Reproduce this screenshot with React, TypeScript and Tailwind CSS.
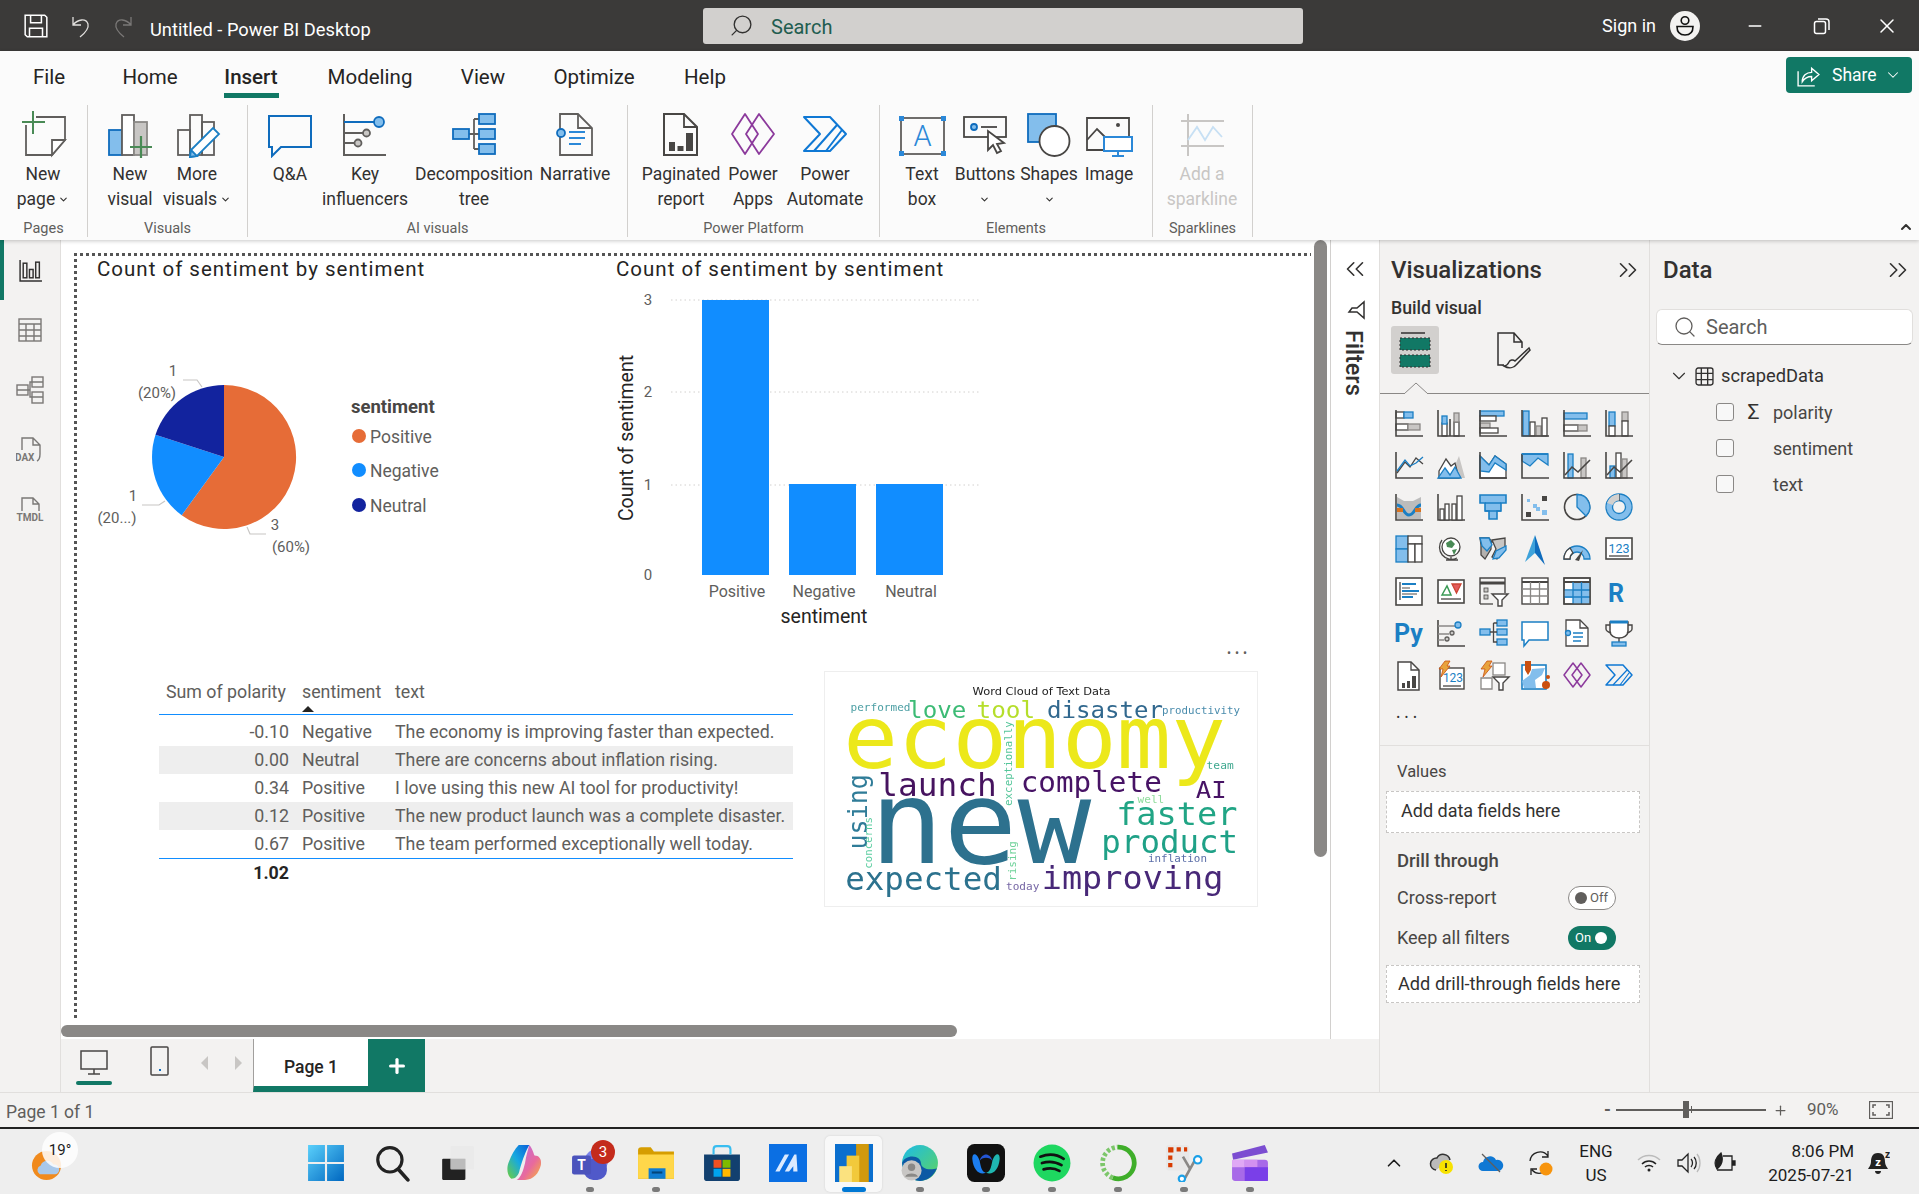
import type { ReactNode } from 'react';
import { ChevronDown, ChevronUp, ChevronsLeft, ChevronsRight, Minus, Plus, Search, X } from 'lucide-react';

const D = '#484644';
const S = '#1b7fc4';
const L = '#83beec';
const Gr = '#c8c6c4';

const Rb = (x: number, y: number, w: number, h: number) => <rect x={x} y={y} width={w} height={h} fill={L} stroke={S} />;
const Rg = (x: number, y: number, w: number, h: number) => <rect x={x} y={y} width={w} height={h} fill={Gr} stroke="#8a8886" />;
const Rw = (x: number, y: number, w: number, h: number) => <rect x={x} y={y} width={w} height={h} fill="#fff" stroke={D} />;
const Axis = () => <path d="M1 1V27H28" stroke={D} strokeWidth="1.6" />;

// ribbon button: 48px icon + up to two label lines
const RibbonItem = ({ w, icon, lines, chevron, muted }: { w: number; icon: ReactNode; lines: string[]; chevron?: boolean; muted?: boolean }) => (
  <div style={{ width: w }} className={`flex flex-col items-center ${muted ? 'text-[#c8c6c4]' : 'text-[#323130]'}`}>
    <svg viewBox="0 0 48 48" fill="none" strokeWidth="1.8" className="w-[48px] h-[48px] shrink-0 mt-[5px]">{icon}</svg>
    <div className="mt-[4px] text-[17.5px] leading-[25px] text-center whitespace-nowrap flex flex-col items-center">
      {lines.map((l, i) => (
        <span key={l} className="flex items-center h-[25px]">
          {l}
          {chevron && lines.length > 1 && i === lines.length - 1 && <ChevronDown size={11} strokeWidth={2.4} className="ml-[3px]" />}
        </span>
      ))}
      {chevron && lines.length === 1 && <ChevronDown size={11} strokeWidth={2.4} className="h-[25px]" />}
    </div>
  </div>
);

const RibbonGroup = ({ w, pl, label, children }: { w: number; pl: number; label: string; children: ReactNode }) => (
  <div style={{ width: w }} className="h-[132px] border-r border-[#d2d0ce] flex flex-col shrink-0">
    <div style={{ paddingLeft: pl }} className="flex flex-1">{children}</div>
    <div className="h-[22px] text-[14.5px] leading-[28px] text-center text-[#605e5c]">{label}</div>
  </div>
);

const vizIcons: ReactNode[] = [
  <>{Rw(1, 3, 8, 6)}{Rb(9, 3, 9, 6)}{Rw(1, 15, 12, 6)}{Rg(13, 15, 12, 6)}<Axis /></>,
  <>{Rw(5, 14, 5, 13)}{Rb(5, 7, 5, 8)}{Rw(17, 13, 5, 14)}{Rg(17, 4, 5, 9)}<path d="M13 10V27M1 1V27H28" stroke={D} strokeWidth="1.6" /></>,
  <>{Rb(1, 2, 24, 5)}{Rw(1, 7, 16, 5)}{Rg(1, 14, 10, 5)}{Rw(1, 19, 18, 5)}<Axis /></>,
  <>{Rb(2, 2, 6, 25)}{Rw(9, 13, 5, 14)}{Rg(15, 17, 5, 10)}{Rw(21, 9, 5, 18)}<Axis /></>,
  <>{Rb(1, 4, 23, 6)}{Rw(1, 16, 14, 6)}{Rg(15, 16, 9, 6)}<Axis /></>,
  <>{Rb(4, 3, 6, 14)}{Rw(4, 17, 6, 10)}{Rg(17, 3, 6, 9)}{Rw(17, 12, 6, 15)}<Axis /></>,
  <><Axis /><path d="M2 22L10 11L15 16L21 7L28 13" stroke={D} /><path d="M2 18L10 7L15 13L21 10L28 4" stroke={S} transform="translate(0 2)" /></>,
  <><path d="M2 27L10 11L16 19L22 5L28 27Z" fill={Gr} /><path d="M2 20L9 8L14 15L18 12L22 27H2Z" fill="#fff" stroke={D} /><path d="M1 27L8 17L13 24L18 16L24 27Z" fill={L} stroke={S} /></>,
  <><path d="M1 27V5L10 14L16 5L27 13V27Z" fill="#fff" stroke={D} /><path d="M1 20V5L10 14L16 5L27 13V19L16 12L10 21Z" fill={L} stroke={S} /><Axis /></>,
  <><path d="M1 3H27V14L17 7L9 15L1 10Z" fill={L} stroke={S} /><path d="M1 3V27H28" stroke={D} strokeWidth="1.6" /><path d="M1 3H27" stroke={S} strokeWidth="1.6" /></>,
  <>{Rb(5, 3, 5, 24)}{Rg(18, 7, 5, 20)}<path d="M2 24L9 16L15 21L27 9" stroke={D} strokeWidth="1.6" /><Axis /></>,
  <>{Rb(5, 15, 5, 12)}{Rw(11, 2, 5, 25)}{Rg(17, 8, 5, 19)}<path d="M2 24L9 16L15 21L27 9" stroke={D} strokeWidth="1.6" /><Axis /></>,
  <><path d="M2 4L9 8L18 8L26 4V26H2Z" fill="#bcbcbc" /><path d="M2 12C9 12 8 22 14 22S20 12 26 12" stroke={S} strokeWidth="3" /><path d="M2 17H8M20 17H26" stroke="#d9731f" strokeWidth="4" /><Axis /></>,
  <><Axis />{Rw(3, 16, 4, 11)}{Rw(8, 11, 4, 16)}{Rw(15, 11, 4, 16)}{Rw(20, 3, 5, 24)}</>,
  <><path d="M1 2H27V10H22V18H18V26H10V18H6V10H1Z" fill={L} stroke={S} strokeWidth="1.6" /><path d="M6 10H22M6 18H22" stroke={S} strokeWidth="1.4" /></>,
  <><Axis /><rect x="21" y="3" width="5" height="5" fill={D} /><rect x="5" y="19" width="5" height="5" fill={D} /><rect x="12" y="11" width="4" height="4" fill={L} /><rect x="6" y="6" width="3" height="3" fill={L} /><rect x="21" y="17" width="5" height="5" fill={L} /><rect x="15" y="14" width="4" height="4" fill={L} /></>,
  <><circle cx="14" cy="14" r="12.5" fill="#f3f2f1" stroke={D} strokeWidth="1.6" /><path d="M14 14V1.5A12.5 12.5 0 0 1 23 23Z" fill={L} stroke={S} /></>,
  <><circle cx="14" cy="14" r="9.5" stroke={L} strokeWidth="6" /><circle cx="14" cy="14" r="13" stroke={S} /><circle cx="14" cy="14" r="6.5" stroke={S} /><path d="M14 1V8" stroke={D} /><path d="M14 1A13 13 0 0 0 2 10L8 12A6.500 6.500 0 0 1 14 7.500Z" fill="#d2d0ce" /></>,
  <>{Rb(1, 1, 12, 13)}{Rb(1, 14, 12, 13)}{Rw(13, 1, 14, 8)}{Rw(13, 9, 7, 18)}{Rw(20, 9, 7, 18)}</>,
  <><circle cx="14" cy="12" r="9" fill="#fff" stroke={D} /><path d="M9 8L14 5L18 9L15 13L10 12ZM15 15L20 14L17 20Z" fill="#498a55" /><path d="M9 25H21M14 22V25M5 5A12 12 0 0 0 20 23" stroke={D} strokeWidth="1.3" /></>,
  <><path d="M1 3H10L13 7H12V14L6 24L2 20V10Z" fill="#b3b0ad" stroke={D} /><path d="M1 3H10L13 10L8 16L3 11Z" fill={L} stroke={S} /><path d="M13 5L26 3V14L18 24L13 22L17 14Z" fill="#c8c6c4" stroke={D} /><path d="M27 11V15L20 23L14 24L17 16Z" fill={L} stroke={S} /></>,
  <><path d="M14 0L4 27L14 18Z" fill="#3ea2da" /><path d="M14 0L24 30L14 18Z" fill="#0f6cbd" /></>,
  <><path d="M1 24A13 13 0 0 1 27 24H21A7 7 0 0 0 7 24Z" fill={L} stroke={S} /><path d="M1 24A13 13 0 0 1 7 13L10 18A7 7 0 0 0 7 24Z" fill="#fff" stroke={D} /><path d="M12 25L20 15L16 26Z" fill={D} /></>,
  <><rect x="1" y="3" width="26" height="21" fill="#fff" stroke={D} strokeWidth="1.6" /><path d="M4 21H24" stroke={D} /><text x="14" y="18" textAnchor="middle" fontSize="12.500" fill={S} stroke="none" fontFamily="Roboto">123</text></>,
  <><rect x="1" y="1" width="26" height="27" fill="#fff" stroke={D} strokeWidth="1.6" /><path d="M5 5V23" stroke={D} /><path d="M7 7H21M7 14H24M7 20H18" stroke={S} strokeWidth="2" /><path d="M7 11H15M7 17H22" stroke="#8a8886" /></>,
  <><rect x="1" y="3" width="26" height="23" fill="#fff" stroke={D} strokeWidth="1.6" /><path d="M4 22H24" stroke={D} /><path d="M5 18L10 9L14 18Z" stroke="#3a9a55" strokeWidth="1.5" /><path d="M15 7H24L19.500 16Z" fill="#e35b5b" stroke="#c43" /></>,
  <><path d="M1 27V1H26V16" stroke={D} strokeWidth="1.4" /><path d="M1 6H26" stroke={D} strokeWidth="3" /><rect x="5" y="11" width="4" height="4" fill={Gr} stroke={D} strokeWidth=".8" /><rect x="5" y="18" width="4" height="4" fill={Gr} stroke={D} strokeWidth=".8" /><path d="M1 27H14" stroke={D} /><path d="M13 17H29L23 23V29H19V23Z" fill="#fff" stroke={D} strokeWidth="1.4" /></>,
  <><rect x="1" y="1" width="26" height="26" fill="#fff" stroke={D} strokeWidth="1.4" /><path d="M1 5H27" stroke={D} strokeWidth="2" /><path d="M1 12H27M1 19H27M9.500 5V27M18.500 5V27" stroke="#8a8886" /></>,
  <><rect x="1" y="1" width="26" height="26" fill="#fff" stroke={D} strokeWidth="1.4" /><path d="M10 5H27V27H10ZM1 14H27V21H1Z" fill={L} /><path d="M1 5H27" stroke={D} strokeWidth="2" /><path d="M1 13H27M1 20H27M10 5V27M18.500 5V27" stroke={S} /><rect x="1" y="1" width="26" height="26" stroke={D} strokeWidth="1.4" /></>,
  <text x="11" y="25" textAnchor="middle" fontSize="25" fontWeight="700" fill="#1b7fc4" stroke="none" fontFamily="Roboto">R</text>,
  <text x="-1" y="23" fontSize="25" fontWeight="700" fill="#1b7fc4" stroke="none" fontFamily="Roboto">Py</text>,
  <><path d="M1 1V27H28" stroke={D} strokeWidth="1.6" /><path d="M1 7H18M1 15H12M1 21H7" stroke="#8a8886" /><circle cx="21" cy="6" r="3" fill={L} stroke={S} /><circle cx="15" cy="14" r="2" fill={Gr} stroke="#605e5c" /><circle cx="10" cy="20" r="2" fill={Gr} stroke="#605e5c" /></>,
  <>{Rb(1, 10, 10, 6)}{Rb(18, 1, 10, 6)}{Rb(18, 10, 10, 6)}{Rb(18, 20, 10, 6)}<path d="M11 13H18M14.500 4V23H18M14.500 4H18" stroke={D} /></>,
  <path d="M1 3H27V21H8L3 27V21H1Z" fill="#fff" stroke={S} strokeWidth="1.5" />,
  <><path d="M3 1H17L25 9V27H3Z" fill="#fff" stroke={D} strokeWidth="1.3" /><path d="M17 1V9H25" stroke={D} /><circle cx="5" cy="14" r="2.500" fill={L} stroke={S} /><path d="M10 14H20M10 18H20M10 22H18" stroke={S} /></>,
  <><path d="M5 3H23V12C23 17 18 19 14 19S5 17 5 12Z" fill="#fff" stroke={D} strokeWidth="1.5" /><path d="M5 3H23" stroke={S} strokeWidth="3" /><path d="M5 6H1V10C1 12 3 13 6 14M23 6H27V10C27 12 25 13 22 14M14 19V24" stroke={D} strokeWidth="1.4" /><rect x="7" y="23" width="14" height="4" fill={L} stroke={S} /></>,
  <><path d="M3 1H16L24 9V29H3Z" fill="#fff" stroke={D} strokeWidth="1.5" /><path d="M16 1V9H24" stroke={D} /><rect x="7" y="22" width="3" height="5" fill={D} /><rect x="12" y="20" width="3" height="7" fill={D} /><rect x="17" y="15" width="4" height="12" fill={D} /></>,
  <><rect x="3" y="7" width="24" height="21" fill="#fff" stroke={D} strokeWidth="1.4" /><path d="M6 25H24" stroke={D} /><text x="16" y="21" textAnchor="middle" fontSize="12" fill={S} stroke="none" fontFamily="Roboto">123</text><path d="M8 0H13L10 5H13L4 16L6 8H2Z" fill="#e8a33d" stroke="#ca5010" strokeWidth=".8" /></>,
  <><path d="M8 0H13L10 5H13L4 16L6 8H2Z" fill="#e8a33d" stroke="#ca5010" strokeWidth=".8" /><rect x="14" y="2" width="12" height="12" fill="#fff" stroke="#8a8886" /><path d="M2 17H13V28H2Z" fill="#fff" stroke="#8a8886" /><path d="M14 16H30L24 22V29H20V22Z" fill="#fff" stroke={D} strokeWidth="1.4" /></>,
  <><rect x="1" y="4" width="24" height="24" fill="#fff" stroke={S} strokeWidth="1.6" /><path d="M1 20L9 14L11 8L24 7L21 14L14 19L15 27H3Z" fill={L} /><path d="M4 0H10V9L7 14L4 9Z" fill="#ca5010" /><circle cx="25" cy="24" r="4" fill="#ca5010" /><circle cx="27" cy="16" r="2" fill="#ca5010" /></>,
  <g stroke="#8c3a9c" strokeWidth="1.500" strokeLinejoin="round"><path d="M10 2L1 14L10 26L19 14Z" /><path d="M18 2L27 14L18 26L9 14Z" /></g>,
  <><path d="M1 4H18L27 14L18 24H1L10 14Z" stroke="#0f78d4" strokeWidth="1.500" strokeLinejoin="round" /><path d="M8 24L22 9M15 24L24 12" stroke="#0f78d4" strokeWidth="1.200" /></>,
];

const words = [
  ['performed', 120, 150, 32, '#4c9fa4', 175],
  ['love', 298, 172, 72, '#3cbb75', 162],
  ['tool', 505, 172, 72, '#b5de2b', 163],
  ['disaster', 718, 172, 72, '#31688e', 337],
  ['productivity', 1062, 160, 30, '#4a8cad', 230],
  ['economy', 121, 322, 266, '#ece81a', 1105],
  ['launch', 210, 408, 95, '#46135f', 340],
  ['complete', 640, 395, 85, '#471365', 410],
  ['AI', 1168, 413, 67, '#471365', 80],
  ['team', 1197, 328, 30, '#3fa88f', 76],
  ['well', 988, 428, 30, '#8fdc9c', 75],
  ['new', 210, 612, 350, '#2d718e', 600],
  ['faster', 930, 495, 96, '#21a585', 348],
  ['product', 885, 582, 94, '#1fa187', 395],
  ['inflation', 1020, 608, 32, '#5b6ea8', 172],
  ['expected', 110, 692, 95, '#2c728e', 455],
  ['improving', 705, 691, 98, '#482878', 530],
  ['today', 590, 694, 30, '#7667a5', 95],
] as const;

const vWords = [
  ['using', 166, 562, 80, '#2f7c98', 212],
  ['exceptionally', 605, 435, 32, '#55c69a', 250],
  ['concerns', 183, 625, 30, '#5bcda0', 150],
  ['rising', 618, 662, 30, '#6fd29a', 114],
] as const;

const rows = [
  ['-0.10', 'Negative', 'The economy is improving faster than expected.'],
  ['0.00', 'Neutral', 'There are concerns about inflation rising.'],
  ['0.34', 'Positive', 'I love using this new AI tool for productivity!'],
  ['0.12', 'Positive', 'The new product launch was a complete disaster.'],
  ['0.67', 'Positive', 'The team performed exceptionally well today.'],
];

const Toggle = ({ on }: { on?: boolean }) =>
  on ? (
    <div className="w-[48px] h-[24px] rounded-full bg-[#117865] flex items-center pl-[7px] gap-[4px] text-white text-[13px]">
      On<span className="w-[12px] h-[12px] rounded-full bg-white" />
    </div>
  ) : (
    <div className="w-[48px] h-[24px] rounded-full bg-white border border-[#8a8886] flex items-center pl-[6px] gap-[3px] text-[#605e5c] text-[13px]">
      <span className="w-[12px] h-[12px] rounded-full bg-[#605e5c]" />Off
    </div>
  );

const TaskItem = ({ dot, active, children }: { dot?: boolean; active?: boolean; children: ReactNode }) => (
  <div className="relative w-[66px] h-full flex items-center justify-center">
    {active && <div className="absolute left-[4px] top-[7px] w-[57px] h-[56px] rounded-[5px] bg-[#f8f8f8] shadow-[0_0_2px_#ccc]" />}
    <svg viewBox="0 0 36 36" fill="none" className="relative w-[38px] h-[38px] mt-[2px]">{children}</svg>
    {dot && <div className="absolute left-[29px] bottom-[2px] w-[8px] h-[5px] rounded-full bg-[#7a7a7a]" />}
    {active && <div className="absolute left-[21px] bottom-[2px] w-[24px] h-[5px] rounded-full bg-[#0078d4]" />}
  </div>
);

const App = () => {
  return (
    <div className="w-[1919px] h-[1194px] overflow-hidden flex flex-col bg-[#f3f2f1] font-['Roboto','Liberation_Sans',sans-serif] text-[#323130]">
      {/* Title bar */}
      <div className="h-[51px] shrink-0 bg-[#3b3a39] flex items-center text-white">
        <div className="ml-[14px] w-[44px] flex justify-center">
          <svg viewBox="0 0 24 24" fill="none" stroke="#fff" strokeWidth="1.4" className="w-[26px] h-[26px]"><path d="M2 2H20L22 4V22H4L2 20Z" /><path d="M7 2V9H17V2M6 22V14H18V22" /></svg>
        </div>
        <div className="w-[44px] flex justify-center">
          <svg viewBox="0 0 24 24" fill="none" stroke="#e1dfdd" strokeWidth="1.3" className="w-[24px] h-[24px]"><path d="M5 3V11H13M5 11C10 5 18 4 20 10C21 14 17 19 12 23" /></svg>
        </div>
        <div className="w-[44px] flex justify-center">
          <svg viewBox="0 0 24 24" fill="none" stroke="#7a7877" strokeWidth="1.3" className="w-[24px] h-[24px]"><path d="M19 3V11H11M19 11C14 5 6 4 4 10C3 14 7 19 12 23" /></svg>
        </div>
        <div className="ml-[4px] w-[553px] text-[18.3px] pt-[8px]">Untitled - Power BI Desktop</div>
        <div className="w-[600px] h-[36px] bg-[#d2d0ce] rounded-[3px] flex items-center pl-[26px] text-[#225d50] text-[20px]">
          <Search size={25} strokeWidth={1.3} className="text-[#323130] -scale-x-100" />
          <span className="ml-[17px] pt-[2px]">Search</span>
        </div>
        <div className="ml-auto flex items-center">
          <span className="text-[18px]">Sign in</span>
          <svg viewBox="0 0 30 30" className="ml-[14px] w-[30px] h-[30px]"><circle cx="15" cy="15" r="15" fill="#f3f2f1" /><circle cx="15" cy="9.500" r="3.800" fill="none" stroke="#111" strokeWidth="1.600" /><path d="M7 15.500H23C23 21 20 24 15 24S7 21 7 15.500Z" fill="none" stroke="#111" strokeWidth="1.600" /></svg>
          <div className="ml-[22px] w-[66px] flex justify-center"><Minus size={20} strokeWidth={1.6} /></div>
          <div className="w-[67px] flex justify-center">
            <svg viewBox="0 0 18 18" fill="none" stroke="#fff" strokeWidth="1.500" className="w-[18px] h-[18px]"><rect x="1.500" y="4.500" width="11" height="12" rx="2" /><path d="M5 2H13C15 2 16 3 16 5V13" /></svg>
          </div>
          <div className="w-[64px] flex justify-center"><X size={24} strokeWidth={1.5} /></div>
        </div>
      </div>

      {/* Ribbon */}
      <div className="relative z-10 h-[189px] shrink-0 bg-[#fbfbfb] shadow-[0_1px_4px_rgba(0,0,0,0.22)]">
        <div className="h-[54px] flex items-start justify-between">
          <div className="flex text-[20.5px] text-[#252423]">
            {[['File', 98], ['Home', 104], ['Insert', 98], ['Modeling', 140], ['View', 86], ['Optimize', 136], ['Help', 86]].map(([t, w]) => (
              <div key={t} style={{ width: w }} className="h-[54px] relative flex justify-center pt-[11px]">
                <span className={t === 'Insert' ? 'font-medium' : ''}>{t}</span>
                {t === 'Insert' && <div className="absolute top-[42px] left-[22px] w-[55px] h-[5px] bg-[#117865]" />}
              </div>
            ))}
          </div>
          <div className="mt-[6px] mr-[7px] w-[126px] h-[36px] rounded-[4px] bg-[#117865] flex items-center pl-[10px] text-white text-[17.5px]">
            <svg viewBox="0 0 24 24" fill="none" stroke="#fff" strokeWidth="1.300" className="w-[25px] h-[25px]"><path d="M2 8V22H18" /><path d="M6 18C6 12 10 9 15 9V5L22 11L15 17V13C11 13 8 15 6 18Z" /></svg>
            <span className="ml-[11px]">Share</span>
            <ChevronDown size={18} strokeWidth={1.4} className="ml-[7px]" />
          </div>
        </div>
        <div className="flex">
          <RibbonGroup w={88} pl={8} label="Pages">
            <RibbonItem w={70} lines={['New', 'page']} chevron icon={<>
              <path d="M7 15V45H33L46 30V7H17" stroke="#605e5c" /><path d="M33 45V30H46Z" fill="#fff" stroke="#605e5c" /><path d="M14 1V24M3 12H26" stroke="#498a55" strokeWidth="2" />
            </>} />
          </RibbonGroup>
          <RibbonGroup w={160} pl={8} label="Visuals">
            <RibbonItem w={68} lines={['New', 'visual']} icon={<>
              <rect x="3" y="20" width="13" height="25" fill={L} stroke="#0f6cbd" /><rect x="16" y="5" width="12" height="40" fill="#fff" stroke="#605e5c" /><rect x="28" y="12" width="13" height="33" fill={Gr} stroke="#8a8886" /><path d="M35 26V48M24 37H46" stroke="#498a55" strokeWidth="2.200" />
            </>} />
            <RibbonItem w={66} lines={['More', 'visuals']} chevron icon={<>
              <rect x="5" y="20" width="12" height="25" stroke="#605e5c" /><rect x="17" y="5" width="12" height="40" stroke="#605e5c" /><rect x="29" y="12" width="12" height="33" stroke="#605e5c" /><path d="M40 18L46 24L24 46L17 47L18 40Z" fill="#fff" stroke="#1b7fc4" /><path d="M18 40L24 46L17 47Z" fill={L} stroke="#1b7fc4" />
            </>} />
          </RibbonGroup>
          <RibbonGroup w={380} pl={7} label="AI visuals">
            <RibbonItem w={70} lines={['Q&A']} icon={<path d="M3 6H45V37H15L6 46V37H3Z" stroke="#0f6cbd" strokeWidth="2" />} />
            <RibbonItem w={80} lines={['Key', 'influencers']} icon={<>
              <path d="M3 4V45H45" stroke="#605e5c" strokeWidth="2" /><path d="M3 12H33" stroke="#0f6cbd" strokeWidth="2" /><circle cx="38" cy="12" r="5" fill={L} stroke="#0f6cbd" /><path d="M3 23H22M3 33H14" stroke="#605e5c" /><circle cx="25.500" cy="23" r="3.500" fill={Gr} stroke="#605e5c" /><circle cx="17" cy="33" r="3.500" fill={Gr} stroke="#605e5c" />
            </>} />
            <RibbonItem w={138} lines={['Decomposition', 'tree']} icon={<>
              <path d="M19 24H29M24 9V39M24 9H29M24 39H29" stroke="#605e5c" /><rect x="3" y="19" width="16" height="10" fill={L} stroke="#0f6cbd" /><rect x="29" y="4" width="16" height="10" fill={L} stroke="#0f6cbd" /><rect x="29" y="19" width="16" height="10" fill={L} stroke="#0f6cbd" /><rect x="29" y="34" width="16" height="10" fill={L} stroke="#0f6cbd" />
            </>} />
            <RibbonItem w={64} lines={['Narrative']} icon={<>
              <path d="M9 4H27L41 18V45H9Z" stroke="#605e5c" /><path d="M27 4V18H41" stroke="#605e5c" /><circle cx="10" cy="23" r="4" fill={L} stroke="#0f6cbd" /><path d="M18 22H34M18 28H34M18 34H30" stroke="#2b88d8" />
            </>} />
          </RibbonGroup>
          <RibbonGroup w={252} pl={9} label="Power Platform">
            <RibbonItem w={88} lines={['Paginated', 'report']} icon={<>
              <path d="M7 4H27L40 17V45H7Z" stroke="#484644" strokeWidth="2" /><path d="M27 4V17H40" stroke="#484644" /><rect x="12" y="32" width="6" height="9" fill="#484644" /><rect x="20.500" y="36" width="6" height="5" fill="#484644" /><rect x="29" y="23" width="7" height="18" fill="#484644" />
            </>} />
            <RibbonItem w={56} lines={['Power', 'Apps']} icon={
              <g stroke="#8c3a9c" strokeWidth="1.800" strokeLinejoin="round"><path d="M16 4L3 24L16 44L29 24Z" /><path d="M30 4L45 24L30 44L17 24Z" /></g>
            } />
            <RibbonItem w={88} lines={['Power', 'Automate']} icon={
              <g stroke="#0f78d4" strokeWidth="2" strokeLinejoin="round"><path d="M3 7H29L45 24L29 41H3L19 24Z" /><path d="M13 41L36 15M25 41L41 20" /></g>
            } />
          </RibbonGroup>
          <RibbonGroup w={273} pl={10} label="Elements">
            <RibbonItem w={64} lines={['Text', 'box']} icon={<>
              <rect x="3" y="8" width="43" height="36" stroke="#605e5c" /><rect x="1" y="6" width="5" height="5" fill="#2b88d8" /><rect x="43" y="6" width="5" height="5" fill="#2b88d8" /><rect x="1" y="41" width="5" height="5" fill="#2b88d8" /><rect x="43" y="41" width="5" height="5" fill="#2b88d8" /><text x="24.500" y="36" textAnchor="middle" fontSize="29" fontWeight="300" fill="#2b88d8" fontFamily="Roboto">A</text>
            </>} />
            <RibbonItem w={62} lines={['Buttons']} chevron icon={<>
              <rect x="3" y="7" width="42" height="20" stroke="#484644" /><circle cx="13" cy="17" r="3" fill={L} stroke="#0f6cbd" /><path d="M20 17H36" stroke="#484644" /><path d="M27 21V40L32 35L36 43L40 41L36 34L43 33Z" fill="#fff" stroke="#484644" />
            </>} />
            <RibbonItem w={66} lines={['Shapes']} chevron icon={<>
              <rect x="3" y="4" width="28" height="28" fill={L} stroke="#0f6cbd" /><circle cx="29.500" cy="31" r="15" fill="#fff" stroke="#484644" />
            </>} />
            <RibbonItem w={54} lines={['Image']} icon={<>
              <path d="M19 40H2V8H44V26" stroke="#484644" /><path d="M2 30L12 19L20 27" stroke="#484644" /><circle cx="33" cy="15" r="2" fill="#484644" /><rect x="19" y="27" width="28" height="14" fill="#fff" stroke="#2b88d8" strokeWidth="2" /><path d="M33 41V46M27 46H39" stroke="#2b88d8" strokeWidth="2" />
            </>} />
          </RibbonGroup>
          <RibbonGroup w={100} pl={9} label="Sparklines">
            <RibbonItem w={80} muted lines={['Add a', 'sparkline']} icon={<>
              <path d="M3 11H46M3 36H46M10 4V46" stroke={Gr} strokeWidth="2" /><path d="M10 30L19 17L27 30L35 17L44 27" stroke="#c7e0f4" />
            </>} />
          </RibbonGroup>
        </div>
        <ChevronUp size={16} strokeWidth={3} className="absolute left-[1898px] top-[168px] text-[#323130]" />
      </div>

      {/* Main */}
      <div className="flex h-[852px] shrink-0">
        {/* View switcher */}
        <div className="w-[61px] shrink-0 border-r border-[#e1dfdd] relative">
          <div className="absolute left-0 top-0 w-[4px] h-[60px] bg-[#117865]" />
          <div className="h-[60px] flex items-center justify-center">
            <svg viewBox="0 0 24 24" fill="none" stroke="#323130" strokeWidth="1.400" className="w-[25px] h-[25px]"><path d="M2 2V22H23" /><rect x="5" y="5" width="3.500" height="14" /><rect x="11" y="11" width="3.500" height="8" /><rect x="17" y="4" width="3.500" height="15" /></svg>
          </div>
          <div className="h-[60px] flex items-center justify-center">
            <svg viewBox="0 0 24 24" fill="none" stroke="#7a7876" strokeWidth="1.400" className="w-[24px] h-[24px]"><rect x="1" y="1" width="22" height="22" /><path d="M1 6H23M1 12H23M1 18H23M8 6V23M16 6V23" /></svg>
          </div>
          <div className="h-[60px] flex items-center justify-center">
            <svg viewBox="0 0 28 28" fill="none" stroke="#7a7876" strokeWidth="1.400" className="w-[28px] h-[28px]"><rect x="1" y="9" width="11" height="10" /><rect x="16" y="1" width="11" height="10" /><rect x="16" y="16" width="11" height="11" /><path d="M1 14H12M16 6H27M16 21H27M12 14H14V6H16M14 14V21H16" /></svg>
          </div>
          <div className="h-[60px] flex items-center justify-center">
            <svg viewBox="0 0 28 28" fill="none" stroke="#7a7876" strokeWidth="1.400" className="w-[28px] h-[28px]"><path d="M6 14V2H17L24 9V18C24 22 23 24 21 25M17 2V9H24" /><text x="-1" y="25" fontSize="10" fontWeight="700" fill="#7a7876" stroke="none" fontFamily="Roboto">DAX</text></svg>
          </div>
          <div className="h-[60px] flex items-center justify-center">
            <svg viewBox="0 0 28 28" fill="none" stroke="#7a7876" strokeWidth="1.400" className="w-[28px] h-[28px]"><path d="M6 15V2H17L23 8V15M17 2V8H23" /><text x="14" y="25" textAnchor="middle" fontSize="10" fontWeight="700" fill="#7a7876" stroke="none" fontFamily="Roboto">TMDL</text></svg>
          </div>
        </div>

        {/* Canvas + page tabs */}
        <div className="w-[1318px] shrink-0 flex flex-col">
          <div className="h-[799px] flex shrink-0 bg-white">
            <div className="relative w-[1269px] shrink-0 overflow-hidden">
              {/* report page outline */}
              <div className="absolute left-[13px] top-[13px] w-[1237px] h-[3px] bg-[repeating-linear-gradient(to_right,#555_0_3px,transparent_3px_6px)]" />
              <div className="absolute left-[13px] top-[13px] w-[3px] h-[768px] bg-[repeating-linear-gradient(to_bottom,#555_0_3px,transparent_3px_6px)]" />

              {/* Pie */}
              <div className="absolute left-[36px] top-[14px] text-[20.5px] tracking-[1px] text-[#252423]">Count of sentiment by sentiment</div>
              <svg viewBox="90 350 380 210" className="absolute left-[29px] top-[110px] w-[380px] h-[210px]" fontFamily="Roboto" fontSize="15" fill="#605e5c">
                <path d="M224 457V385A72 72 0 1 1 181.700 515.200Z" fill="#e66c37" />
                <path d="M224 457L181.700 515.200A72 72 0 0 1 155.500 434.800Z" fill="#118dff" />
                <path d="M224 457L155.500 434.800A72 72 0 0 1 224 385Z" fill="#12239e" />
                <g fill="none" stroke="#c8c6c4" strokeWidth="1.200"><path d="M183 380H197L202 387" /><path d="M142 505H159L165 501" /><path d="M247 527L250 534H266" /></g>
                <text x="173" y="376" textAnchor="middle">1</text>
                <text x="157" y="398" textAnchor="middle">(20%)</text>
                <text x="133" y="501" textAnchor="middle">1</text>
                <text x="117" y="523" textAnchor="middle">(20...)</text>
                <text x="275" y="530" textAnchor="middle">3</text>
                <text x="291" y="552" textAnchor="middle">(60%)</text>
                <text x="351" y="413" fontWeight="700" fontSize="18.500" fill="#484644">sentiment</text>
                <circle cx="359" cy="436" r="7" fill="#e66c37" /><text x="370" y="443" fontSize="17.500">Positive</text>
                <circle cx="359" cy="470" r="7" fill="#118dff" /><text x="370" y="477" fontSize="17.500">Negative</text>
                <circle cx="359" cy="505" r="7" fill="#12239e" /><text x="370" y="512" fontSize="17.500">Neutral</text>
              </svg>

              {/* Bars */}
              <div className="absolute left-[555px] top-[14px] text-[20.5px] tracking-[1px] text-[#252423]">Count of sentiment by sentiment</div>
              <svg viewBox="600 290 400 340" className="absolute left-[539px] top-[50px] w-[400px] h-[340px]" fontFamily="Roboto" fontSize="15" fill="#605e5c">
                <path d="M671 300H979M671 392H979M671 485H979" stroke="#d2d0ce" strokeDasharray="1.500 3" />
                <rect x="702" y="300" width="67" height="275" fill="#118dff" />
                <rect x="789" y="484" width="67" height="91" fill="#118dff" />
                <rect x="876" y="484" width="67" height="91" fill="#118dff" />
                <text x="648" y="305" textAnchor="middle">3</text>
                <text x="648" y="397" textAnchor="middle">2</text>
                <text x="648" y="490" textAnchor="middle">1</text>
                <text x="648" y="580" textAnchor="middle">0</text>
                <text x="737" y="597" textAnchor="middle" fontSize="16">Positive</text>
                <text x="824" y="597" textAnchor="middle" fontSize="16">Negative</text>
                <text x="911" y="597" textAnchor="middle" fontSize="16">Neutral</text>
                <text x="824" y="623" textAnchor="middle" fontSize="19.500" fill="#252423">sentiment</text>
                <text transform="translate(633 438) rotate(-90)" textAnchor="middle" fontSize="19.500" fill="#252423">Count of sentiment</text>
              </svg>

              {/* Table */}
              <div className="absolute left-[98px] top-[433px] w-[634px] text-[17.8px] text-[#605e5c]">
                <div className="relative grid grid-cols-[137px_93px_1fr] h-[42px] items-start pt-[6px] border-b-[1.5px] border-[#118dff]">
                  <div className="pl-[7px] whitespace-nowrap">Sum of polarity</div>
                  <div className="pl-[6px]">sentiment</div>
                  <div className="pl-[6px]">text</div>
                  <div className="absolute left-[143px] top-[33px] w-0 h-0 border-x-[6px] border-x-transparent border-b-[6px] border-b-[#252423]" />
                </div>
                <div className="mt-[3px]">
                  {rows.map(([p, s, t], i) => (
                    <div key={t} className={`grid grid-cols-[137px_93px_1fr] h-[28px] items-center ${i % 2 ? 'bg-[#eeeeee]' : ''}`}>
                      <div className="text-right pr-[7px]">{p}</div>
                      <div className="pl-[6px]">{s}</div>
                      <div className="pl-[6px] whitespace-nowrap">{t}</div>
                    </div>
                  ))}
                </div>
                <div className="grid grid-cols-[137px_93px_1fr] h-[29px] items-center border-t-[1.5px] border-[#118dff] font-bold text-[#252423]">
                  <div className="text-right pr-[7px]">1.02</div>
                </div>
              </div>

              {/* Word cloud (python visual) */}
              <div className="absolute left-[1166px] top-[407px] text-[#605e5c] text-[12px] tracking-[4px] leading-none">•••</div>
              <div className="absolute left-[763px] top-[431px] w-[434px] h-[236px] border border-[#eeeeee] bg-white">
                <svg viewBox="42 33 1302 708" className="w-full h-full blur-[0.4px]" fontFamily="'DejaVu Sans Mono', monospace">
                  <text x="486" y="103" fontFamily="'DejaVu Sans', sans-serif" fontSize="32" textLength="417" lengthAdjust="spacingAndGlyphs" fill="#222">Word Cloud of Text Data</text>
                  {words.map(([t, x, y, size, color, len]) => (
                    <text key={t} x={x - size * 0.1} y={y} fontSize={size} fill={color} textLength={len + size * 0.2} lengthAdjust="spacingAndGlyphs">{t}</text>
                  ))}
                  {vWords.map(([t, x, y, size, color, len]) => (
                    <text key={t} transform={`translate(${x} ${y + size * 0.1}) rotate(-90)`} fontSize={size} fill={color} textLength={len + size * 0.2} lengthAdjust="spacingAndGlyphs">{t}</text>
                  ))}
                </svg>
              </div>

              {/* Scrollbars */}
              <div className="absolute left-[1253px] top-0 w-[13px] h-[617px] rounded-full bg-[#8a8886]" />
              <div className="absolute left-0 top-[785px] w-[896px] h-[12px] rounded-full bg-[#8a8886]" />
            </div>

            {/* Filters rail */}
            <div className="w-[49px] shrink-0 border-l border-[#d2d0ce] flex flex-col items-center">
              <ChevronsLeft size={30} strokeWidth={1.3} className="mt-[14px] -ml-[1px] text-[#323130]" />
              <svg viewBox="0 0 20 20" fill="none" stroke="#323130" strokeWidth="1.500" className="mt-[16px] ml-[4px] w-[20px] h-[20px] rotate-90"><path d="M2 3H18L12 10V18L8 15V10Z" /></svg>
              <div className="mt-[10px] [writing-mode:vertical-rl] text-[23.5px] leading-[26px] font-medium text-[#323130] -ml-[3px]">Filters</div>
            </div>
          </div>

          {/* Page tabs */}
          <div className="flex-1 flex">
            <div className="w-[32px] relative flex justify-center pt-[11px] ml-[17px]">
              <svg viewBox="0 0 28 26" fill="none" stroke="#484644" strokeWidth="1.500" className="w-[28px] h-[26px]"><rect x="1" y="1" width="26" height="18" /><path d="M14 19V24M8 24H20" /></svg>
              <div className="absolute top-[42px] -left-[2px] w-[36px] h-[4px] rounded-full bg-[#117865]" />
            </div>
            <div className="w-[20px] ml-[40px] pt-[7px]">
              <svg viewBox="0 0 20 30" fill="none" stroke="#484644" strokeWidth="1.500" className="w-[20px] h-[30px]"><rect x="1" y="1" width="17" height="28" rx="1" /><path d="M9 24H11" stroke="#0f6cbd" strokeWidth="2" /></svg>
            </div>
            <div className="w-[83px] flex items-center pl-[31px] gap-[27px] pb-[6px]">
              <div className="w-0 h-0 border-y-[7px] border-y-transparent border-r-[7px] border-r-[#c8c6c4]" />
              <div className="w-0 h-0 border-y-[7px] border-y-transparent border-l-[7px] border-l-[#c8c6c4]" />
            </div>
            <div className="w-[115px] bg-white border-l border-[#a19f9d] border-b-[6px] border-b-[#117865] flex items-center justify-center pt-[9px] text-[17.5px] font-medium text-[#252423]">Page 1</div>
            <div className="w-[57px] bg-[#117865] flex items-center justify-center"><Plus size={22} strokeWidth={3.5} className="text-white" /></div>
          </div>
        </div>

        {/* Visualizations */}
        <div className="w-[271px] shrink-0 border-l border-r border-[#e1dfdd]">
          <div className="h-[60px] pl-[11px] pr-[6px] flex items-center justify-between">
            <span className="text-[24px] font-medium text-[#323130]">Visualizations</span>
            <ChevronsRight size={30} strokeWidth={1.3} />
          </div>
          <div className="pl-[11px] h-[16px] leading-[16px] text-[17.7px] font-medium">Build visual</div>
          <div className="mt-[10px] pl-[11px] flex items-center">
            <div className="w-[48px] h-[48px] rounded-[3px] bg-[#d2d0ce] flex items-center justify-center">
              <svg viewBox="0 0 40 40" className="w-[40px] h-[40px]" fill="none"><path d="M6 3H30" stroke="#323130" strokeWidth="1.500" /><rect x="5" y="8" width="30" height="12" fill="#117865" stroke="#323130" strokeDasharray="2 2" /><rect x="5" y="25" width="30" height="12" fill="#117865" stroke="#323130" strokeDasharray="2 2" /></svg>
            </div>
            <svg viewBox="0 0 40 40" fill="none" stroke="#323130" strokeWidth="1.500" className="ml-[53px] w-[40px] h-[40px]"><path d="M12 35H6V3H22L30 12V18M22 3V12H30" /><path d="M37 18L23 31C21 29 18 30 17 32C16 34 15 36 12 36C17 39 22 38 25 34L38 20Z" fill="#f3f2f1" /></svg>
          </div>
          <div className="relative h-[20px] border-b border-[#8a8886]">
            <svg viewBox="0 0 24 12" fill="none" className="absolute left-[24px] top-[8px] w-[24px] h-[12px]"><path d="M0 12L12 1L24 12" fill="#f3f2f1" stroke="#8a8886" /><path d="M1 12.500H23" stroke="#f3f2f1" strokeWidth="2" /></svg>
          </div>
          <div className="ml-[8px] mt-[9px] grid grid-cols-[repeat(6,42px)] auto-rows-[42px]">
            {vizIcons.map((icon, i) => (
              <div key={i} className="flex items-center justify-center">
                <svg viewBox="0 0 28 30" fill="none" strokeWidth="1.300" className="w-[28px] h-[30px] overflow-visible">{icon}</svg>
              </div>
            ))}
            <div className="h-[42px] flex items-center justify-center text-[#323130] text-[10px] tracking-[5px] -mt-[1px]">•••</div>
          </div>
          <div className="mt-[6px] border-t border-[#e1dfdd] h-[46px] pl-[17px] pt-[14px] text-[16.5px] text-[#484644]">Values</div>
          <div className="ml-[6px] w-[254px] h-[42px] bg-white border border-dashed border-[#c8c6c4] flex items-center pl-[14px] pb-[3px] text-[18px]">Add data fields here</div>
          <div className="h-[46px] pl-[17px] pt-[15px] text-[18.5px] font-medium text-[#484644]">Drill through</div>
          <div className="h-[38px] pl-[17px] pr-[33px] flex items-center justify-between text-[18px] text-[#484644]"><span className="pb-[2px]">Cross-report</span><Toggle /></div>
          <div className="h-[42px] pl-[17px] pr-[33px] flex items-center justify-between text-[18px] text-[#484644]"><span className="pb-[2px]">Keep all filters</span><Toggle on /></div>
          <div className="mt-[6px] ml-[6px] w-[254px] h-[38px] bg-white border border-dashed border-[#c8c6c4] flex items-center pl-[11px] text-[18.2px] whitespace-nowrap">Add drill-through fields here</div>
        </div>

        {/* Data */}
        <div className="flex-1">
          <div className="h-[60px] pl-[13px] pr-[6px] flex items-center justify-between">
            <span className="text-[24px] font-medium">Data</span>
            <ChevronsRight size={30} strokeWidth={1.3} />
          </div>
          <div className="mt-[9px] ml-[6px] w-[257px] h-[36px] rounded-[6px] bg-white border border-[#e1dfdd] border-b-[#8a8886] flex items-center pl-[16px] text-[20px] text-[#605e5c]">
            <Search size={24} strokeWidth={1.3} />
            <span className="ml-[9px]">Search</span>
          </div>
          <div className="mt-[13px] h-[36px] pl-[18px] flex items-center text-[18.3px]">
            <ChevronDown size={22} strokeWidth={1.2} />
            <svg viewBox="0 0 18 18" fill="none" stroke="#323130" strokeWidth="1.300" className="ml-[5px] w-[19px] h-[19px]"><rect x="1" y="1" width="16" height="16" rx="2" /><path d="M1 6H17M1 12H17M6 1V17M12 1V17" /></svg>
            <span className="ml-[7px]">scrapedData</span>
          </div>
          {['polarity', 'sentiment', 'text'].map((f, i) => (
            <div key={f} className="h-[36px] pl-[66px] flex items-center text-[18px]">
              <div className="w-[18px] h-[18px] rounded-[3px] bg-[#f8f8f8] border border-[#8a8886]" />
              <div className="w-[39px] flex justify-center text-[21px] leading-none">{i === 0 ? 'Σ' : ''}</div>
              <span className="text-[#484644]">{f}</span>
            </div>
          ))}
        </div>
      </div>

      {/* Status bar */}
      <div className="h-[35px] shrink-0 border-t border-[#e1dfdd] flex items-center text-[17.5px] text-[#605e5c]">
        <span className="ml-[6px] pt-[4px]">Page 1 of 1</span>
        <div className="ml-auto flex items-center">
          <span className="font-bold">-</span>
          <div className="relative ml-[5px] w-[150px] h-[1.5px] bg-[#605e5c]">
            <div className="absolute left-[67px] -top-[8px] w-[6px] h-[17px] bg-[#605e5c]" />
            <div className="absolute left-[75px] -top-[3px] w-[1px] h-[7px] bg-[#605e5c]" />
          </div>
          <Plus size={15} strokeWidth={2} className="ml-[7px]" />
          <span className="ml-[19px] w-[44px] text-[17px]">90%</span>
          <svg viewBox="0 0 24 18" fill="none" stroke="#605e5c" className="ml-[18px] mr-[26px] w-[24px] h-[18px]"><rect x=".5" y=".5" width="23" height="17" strokeWidth="1.300" /><path d="M4 7V4H7M17 4H20V7M4 11V14H7M17 14H20V11" strokeWidth="1.500" /></svg>
        </div>
      </div>
      <div className="h-[2px] shrink-0 bg-[#222]" />

      {/* Taskbar */}
      <div className="h-[65px] shrink-0 bg-[#eeeeee] flex items-center text-[#1c1c1c]">
        <div className="relative w-[293px] h-full shrink-0">
          <svg viewBox="0 0 34 34" className="absolute left-[31px] top-[20px] w-[33px] h-[33px]"><circle cx="16" cy="17" r="15" fill="#f08a1d" /><path d="M9 26a5 5 0 0 1 1-9a7 7 0 0 1 13-1a5 5 0 0 1 2 10Z" fill="#a8c8ea" /></svg>
          <div className="absolute left-[42px] top-[3px] w-[36px] h-[36px] rounded-full bg-white/85 flex items-center justify-center text-[15px]">19°</div>
        </div>
        <TaskItem>
          <defs><linearGradient id="win" x1="0" y1="0" x2="1" y2="1"><stop offset="0" stopColor="#5ad0fb" /><stop offset="1" stopColor="#0067c0" /></linearGradient></defs>
          <path d="M1 1H17V17H1ZM19 1H35V17H19ZM1 19H17V35H1ZM19 19H35V35H19Z" fill="url(#win)" />
        </TaskItem>
        <TaskItem><circle cx="16" cy="15" r="11.500" stroke="#222" strokeWidth="3" /><path d="M24 24L33 34" stroke="#222" strokeWidth="3.500" strokeLinecap="round" /></TaskItem>
        <TaskItem><rect x="3" y="14" width="22" height="20" rx="1" fill="#222" /><rect x="11" y="2" width="22" height="22" rx="1" fill="#e9e9e9" opacity=".9" /><rect x="11" y="14" width="14" height="10" fill="#bbb" /></TaskItem>
        <TaskItem>
          <defs><linearGradient id="cop1" x1="0" y1="1" x2="1" y2="0"><stop offset="0" stopColor="#6fcf3c" /><stop offset=".5" stopColor="#17a9e0" /><stop offset="1" stopColor="#0b5fd9" /></linearGradient><linearGradient id="cop2" x1="0" y1="0" x2="1" y2="1"><stop offset="0" stopColor="#b86be8" /><stop offset=".6" stopColor="#e86a9d" /><stop offset="1" stopColor="#f7b733" /></linearGradient></defs>
          <path d="M13 1H23C20 6 17 14 14 24C13 30 10 33 6 33C2 30 1 22 4 16C6 11 9 5 13 1Z" fill="url(#cop1)" />
          <path d="M23 1C26 4 27 9 28 11C32 11 35 14 34 20C32 28 27 34 19 34H11C15 32 17 26 19 18C20 11 22 5 23 1Z" fill="url(#cop2)" />
        </TaskItem>
        <div className="relative h-full">
          <TaskItem dot>
            <circle cx="24" cy="16" r="11" fill="#7b83eb" /><rect x="12" y="14" width="22" height="20" rx="9" fill="#5059c9" /><rect x="1" y="11" width="18" height="18" rx="2" fill="#4b53bc" /><text x="10" y="25" textAnchor="middle" fontSize="13" fontWeight="700" fill="#fff" fontFamily="Roboto">T</text>
          </TaskItem>
          <div className="absolute left-[34px] top-[11px] w-[24px] h-[24px] rounded-full bg-[#c42b1c] text-white text-[15px] flex items-center justify-center">3</div>
        </div>
        <TaskItem dot><path d="M1 6C1 4 2 3 4 3H13L16 7H35V33H1Z" fill="#d69d00" /><path d="M1 10H35V33H1Z" fill="#ffd74a" /><path d="M11 23H27V33H11Z" fill="#0f7cd1" /><path d="M14 27H24" stroke="#02457a" strokeWidth="2" /></TaskItem>
        <TaskItem>
          <path d="M1 10H35V33C35 34 34 35 33 35H3C2 35 1 34 1 33Z" fill="#12406f" /><path d="M10 10V5C10 3 11 2 13 2H23C25 2 26 3 26 5V10" stroke="#38bdf0" strokeWidth="2" />
          <rect x="10" y="15" width="7.500" height="7.500" fill="#f25022" /><rect x="18.500" y="15" width="7.500" height="7.500" fill="#7fba00" /><rect x="10" y="23.500" width="7.500" height="7.500" fill="#00a4ef" /><rect x="18.500" y="23.500" width="7.500" height="7.500" fill="#ffb900" />
        </TaskItem>
        <TaskItem>
          <rect x="0" y="0" width="36" height="36" fill="#0b6fe3" /><path d="M6 26L15 10H19L10 26ZM15 26L24 10H26L27 26H23V21L19 26Z" fill="#dbeaff" />
        </TaskItem>
        <TaskItem active>
          <rect x="0" y="0" width="36" height="36" fill="#0b6fce" /><rect x="20" y="0" width="12" height="36" fill="#d1990d" /><rect x="11" y="11" width="12" height="25" fill="#f2c93b" /><rect x="4" y="21" width="12" height="15" fill="#fbe27f" />
        </TaskItem>
        <TaskItem dot>
          <defs><linearGradient id="edge" x1="0" y1="0" x2="1" y2="1"><stop offset="0" stopColor="#1bbbe8" /><stop offset="1" stopColor="#5fd45d" /></linearGradient></defs>
          <circle cx="18" cy="18" r="17" fill="url(#edge)" /><path d="M1 18C3 12 12 10 17 14C20 17 18 20 21 22C25 25 31 24 34 23C31 31 24 35 18 35C9 35 2 28 1 18Z" fill="#0c59a4" /><circle cx="10" cy="25" r="9.500" fill="#c8c6c4" /><circle cx="10" cy="22" r="3.500" fill="#8a8886" /><path d="M4 31C5 27 15 27 16 31Z" fill="#8a8886" />
        </TaskItem>
        <TaskItem dot>
          <rect width="36" height="36" rx="7" fill="#111" /><path d="M5 14C5 7 10 9 12 16C13 21 14 27 18 27C13 30 6 26 5 14Z" fill="#1c7ef0" /><path d="M31 14C31 7 26 9 24 16C23 21 22 27 18 27C23 30 30 26 31 14Z" fill="#1fb6b0" /><path d="M12 16C14 8 22 8 24 16C22 12 14 12 12 16Z" fill="#2456d6" />
        </TaskItem>
        <TaskItem dot><circle cx="18" cy="18" r="17.500" fill="#1ed760" /><path d="M7 12C15 9 23 10 29 14M8.500 18C15 16 22 17 27 20M10 24C15 22.500 21 23 25 25.500" stroke="#111" strokeWidth="2.600" strokeLinecap="round" /></TaskItem>
        <TaskItem dot><path d="M18 3A15 15 0 1 1 13 32" stroke="#3fae2a" strokeWidth="4.500" /><path d="M13 32A15 15 0 0 1 18 3" stroke="#7cc66a" strokeWidth="4.500" strokeDasharray="3 2" /></TaskItem>
        <TaskItem dot>
          <rect x="1" y="1" width="22" height="24" rx="3" fill="#e8e8e8" /><path d="M3 3H8V8H3ZM11 3H15V7H11ZM18 3H21V7H18ZM3 11H7V15H3ZM3 18H7V22H3Z" fill="#d83b01" />
          <path d="M17 12L24 24M28 16L18 34" stroke="#8a8886" strokeWidth="2.500" /><circle cx="31" cy="15" r="3.500" fill="#fff" stroke="#1aa0e8" strokeWidth="2" /><circle cx="16" cy="33" r="3" fill="#fff" stroke="#1aa0e8" strokeWidth="2" />
        </TaskItem>
        <TaskItem dot>
          <path d="M1 9L32 1L35 8L2 15Z" fill="#7b4dd1" /><rect x="1" y="15" width="34" height="20" rx="3" fill="#a86ae8" /><rect x="1" y="15" width="12" height="7" fill="#e0a8f5" /><rect x="13" y="15" width="12" height="7" fill="#d291f0" /><rect x="13" y="22" width="22" height="13" fill="#7a3fe8" />
        </TaskItem>

        {/* Tray */}
        <div className="flex-1 flex items-center justify-end h-full text-[17px] pt-[3px]">
          <div className="w-[50px] flex justify-center"><ChevronUp size={22} strokeWidth={1.8} /></div>
          <div className="w-[47px] flex justify-center">
            <svg viewBox="0 0 28 24" className="w-[28px] h-[24px]"><path d="M7 19A6 6 0 0 1 8 7A7 7 0 0 1 21 9" fill="#bbb" stroke="#333" strokeWidth="1.500" /><circle cx="17" cy="16" r="7" fill="#f7e200" /><path d="M17 12V17M17 19V20" stroke="#222" strokeWidth="1.600" /></svg>
          </div>
          <div className="w-[50px] flex justify-center">
            <svg viewBox="0 0 26 20" className="w-[26px] h-[20px]"><path d="M5 18A4.500 4.500 0 0 1 5 9A7 7 0 0 1 18 7A5.500 5.500 0 0 1 21 18Z" fill="#0f78d4" /><path d="M4 1L22 19" stroke="#605e5c" strokeWidth="1.300" /></svg>
          </div>
          <div className="w-[50px] flex justify-center">
            <svg viewBox="0 0 26 26" fill="none" stroke="#222" strokeWidth="1.300" className="w-[26px] h-[26px]"><path d="M2 11A10 10 0 0 1 20 6M20 1V7H14M21 16A10 10 0 0 1 4 20M3 25V19H9" /><circle cx="18" cy="19" r="6.500" fill="#f7940d" stroke="none" /></svg>
          </div>
          <div className="w-[60px] flex flex-col items-center leading-[24px]"><span>ENG</span><span>US</span></div>
          <div className="w-[46px] flex justify-center">
            <svg viewBox="0 0 24 20" fill="none" strokeWidth="1.500" className="w-[24px] h-[20px]"><path d="M1 7C7 1 17 1 23 7" stroke="#bbb" /><path d="M5 11C9 7 15 7 19 11M8 14C10 12 14 12 16 14" stroke="#222" /><circle cx="12" cy="17" r="1.500" fill="#222" /></svg>
          </div>
          <div className="w-[34px] flex justify-center">
            <svg viewBox="0 0 24 22" fill="none" stroke="#222" strokeWidth="1.300" className="w-[24px] h-[22px]"><path d="M1 8H5L11 2V20L5 14H1Z" /><path d="M14 7C16 9 16 13 14 15M17 5C20 8 20 14 17 17" /><path d="M20 2C24 7 24 15 20 20" stroke="#bbb" /></svg>
          </div>
          <div className="w-[38px] flex justify-center">
            <svg viewBox="0 0 26 22" fill="none" stroke="#222" strokeWidth="1.300" className="w-[26px] h-[22px]"><path d="M11 4H20V18H5" /><path d="M20 9H23V13H20" fill="#222" /><path d="M5 17C1 11 4 5 9 1C11 6 11 12 5 17Z" fill="#222" /></svg>
          </div>
          <div className="w-[116px] pr-[6px] flex flex-col items-end leading-[24px]"><span>8:06 PM</span><span>2025-07-21</span></div>
          <div className="w-[36px] flex justify-center">
            <svg viewBox="0 0 24 26" className="w-[24px] h-[26px]"><path d="M12 3C6 3 5 8 5 12C5 15 3 17 2 19H22C21 17 19 15 19 12C19 8 18 3 12 3Z" fill="#222" /><path d="M9 21C9 25 15 25 15 21Z" fill="#222" /><text x="12" y="16" textAnchor="middle" fontSize="11" fontWeight="700" fill="#fff" fontFamily="Roboto">z</text><text x="19" y="8" fontSize="10" fontWeight="700" fill="#222" fontFamily="Roboto">z</text></svg>
          </div>
          <div className="w-[23px]" />
        </div>
      </div>
    </div>
  );
};

export default App;
